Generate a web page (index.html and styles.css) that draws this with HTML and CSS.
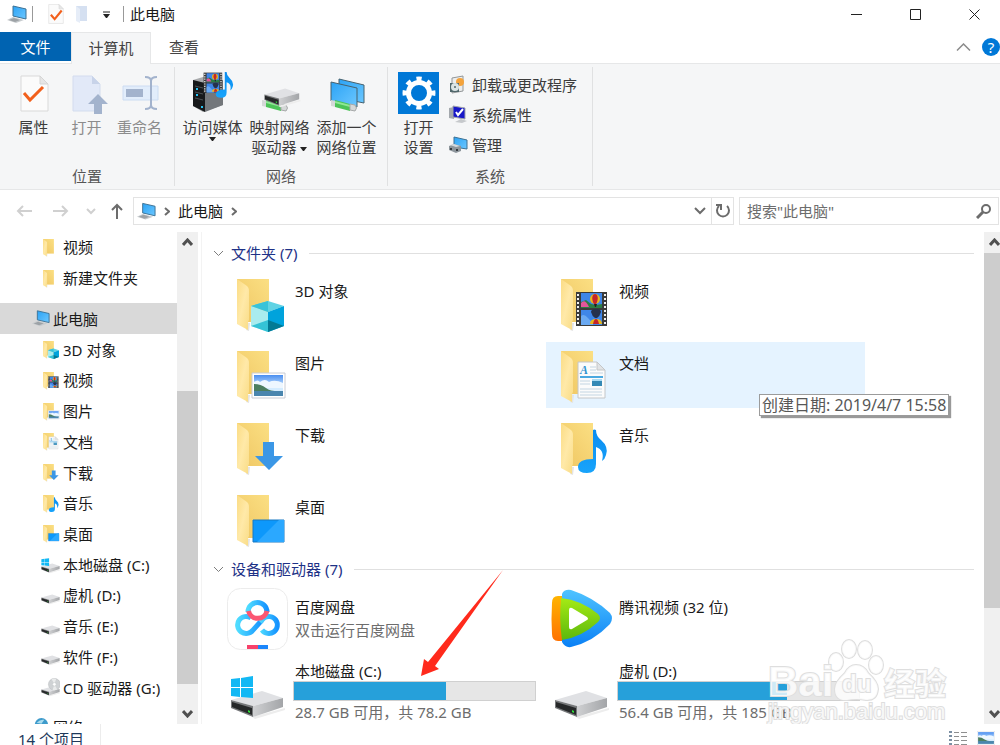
FILE: index.html
```html
<!DOCTYPE html>
<html lang="zh-CN">
<head>
    <meta charset="UTF-8">
    <meta name="viewport" content="width=device-width, initial-scale=1.0">
    <title>此电脑</title>
    <link rel="stylesheet" href="styles.css">
</head>
<body>
    <!-- Shared icon shapes -->
    <svg class="defs" width="0" height="0" aria-hidden="true">
        <defs>
            <linearGradient id="gold" x1="0" y1="1" x2="1" y2="0"><stop offset="0" stop-color="#efc662"/><stop offset="1" stop-color="#fbdf83"/></linearGradient>
            <linearGradient id="flap" x1="0" y1="0" x2="1" y2="1"><stop offset="0" stop-color="#fbdc84"/><stop offset="0.5" stop-color="#ffe9a8"/><stop offset="1" stop-color="#f9dc86"/></linearGradient>
            <linearGradient id="screen" x1="0" y1="0" x2="1" y2="1"><stop offset="0" stop-color="#2ba3f5"/><stop offset="1" stop-color="#6cc7ff"/></linearGradient>
            <linearGradient id="metal" x1="0" y1="0" x2="1" y2="0"><stop offset="0" stop-color="#cfd0d2"/><stop offset="1" stop-color="#a3a5a8"/></linearGradient>
            <linearGradient id="sky" x1="0" y1="0" x2="0" y2="1"><stop offset="0" stop-color="#4a8ef0"/><stop offset="0.6" stop-color="#d4ecff"/></linearGradient>
            <linearGradient id="note" x1="0" y1="0" x2="0" y2="1"><stop offset="0" stop-color="#0a8cf0"/><stop offset="1" stop-color="#18a4fb"/></linearGradient>
            <linearGradient id="cyan" x1="0" y1="0" x2="1" y2="0"><stop offset="0" stop-color="#4fdcff"/><stop offset="1" stop-color="#1593ff"/></linearGradient>
            <linearGradient id="orange" x1="0" y1="0" x2="0" y2="1"><stop offset="0" stop-color="#ffb400"/><stop offset="1" stop-color="#ff7200"/></linearGradient>
            <linearGradient id="blue" x1="0" y1="0" x2="0" y2="1"><stop offset="0" stop-color="#4fc3ff"/><stop offset="1" stop-color="#0a80f5"/></linearGradient>
            <linearGradient id="green" x1="0" y1="0" x2="0" y2="1"><stop offset="0" stop-color="#a5ea15"/><stop offset="1" stop-color="#5cb80c"/></linearGradient>

            <g id="folder">
                <path d="M11 8h32v43H11z" fill="url(#gold)"/>
                <path d="M22 52h2l-1 8-3-1z" fill="#e4e4e4"/>
                <path d="M11 8l10 7q2 2 2 4v30q-1 1-1 4v6l-11-6z" fill="url(#flap)"/>
            </g>
            <g id="film">
                <path d="M26 21h31v34H26z" fill="#3b3b3b"/>
                <path d="M28 23v31M55 23v31" stroke="#f2f2f2" stroke-width="2" stroke-dasharray="2 2"/>
                <path d="M31 22h21v15H31zM31 39h21v15H31z" fill="#3f86e8"/>
                <path d="M31 31l5-2 5 4 5 1 6-1v4H31z" fill="#2b7d43"/>
                <path d="M31 32q4-5 8 4h-8z" fill="#e3559b"/>
                <circle cx="45" cy="28" r="5" fill="#e8b71b"/>
                <path d="M43 24q-2 4 1 9h2q3-5 1-9-2-2-4 0z" fill="#c4252b"/>
                <path d="M44 33h3l-1 3h-1z" fill="#221f1f"/>
                <path d="M41 41q0-3 5-3t5 3q-1 4-4 6h-2q-3-2-4-6z" fill="#26314c"/>
                <path d="M31 45q3-3 7 2t5 3v4H31z" fill="#6aa9f2"/>
                <path d="M40 53q0-5 6-5t6 5z" fill="#e8b71b"/>
                <path d="M43 53q1-5 3-5t3 5z" fill="#c4252b"/>
            </g>
            <g id="note-shape">
                <path d="M43 15q1-1 3 0 0 6 5 10 8 7 5 15-1 4-4 6 3-11-6-14v17q0 9-9 9-9 0-9-6 0-8 15-8z" fill="url(#note)"/>
            </g>
            <g id="f-3d">
                <use href="#folder"/>
                <path d="M25 35l17-5 16 5-16 6z" fill="#5fd3e4"/>
                <path d="M25 35l17 6v20l-17-6z" fill="#a9ecee"/>
                <path d="M42 41l16-6v20l-16 6z" fill="#00a3dc"/>
                <path d="M25 55l17-6v12z" fill="#35c3d6"/>
                <path d="M42 49l16 6-16 6z" fill="#037a94"/>
                <path d="M25 35l17-5v11z" fill="#39c3d9"/>
            </g>
            <g id="picture">
                <path d="M26 30h33v25H26z" fill="#fff" stroke="#c9ccd4"/>
                <path d="M28 32h29v21H28z" fill="url(#sky)"/>
                <path d="M28 39q4-3 6 0 5-4 9 0 6-3 14 1v5H28z" fill="#eef7ff"/>
                <path d="M28 41q7 0 12 4t17 3v1H28z" fill="#4c7e60"/>
                <path d="M28 48h29v5H28z" fill="#4a86ae"/>
            </g>
            <g id="f-picture"><use href="#folder"/><use href="#picture"/></g>
            <g id="f-download"><use href="#folder"/><path d="M37 27h11v14h9L43 55 29 41h8z" fill="#3b97e6"/></g>
            <g id="f-desktop"><use href="#folder"/><path d="M27 33h31v22H27z" fill="#0d98fb" stroke="#1879c2"/><path d="M31 55l22-22h5v22z" fill="#2ba8ff"/></g>
            <g id="f-video"><use href="#folder"/><use href="#film"/></g>
            <g id="f-music"><use href="#folder"/><use href="#note-shape"/></g>
            <g id="f-document">
                <use href="#folder"/>
                <path d="M28 19h19l8 8v28H28z" fill="#fbfbfb" stroke="#c4c6c8"/>
                <path d="M47 19v8h8z" fill="#e1e3e5" stroke="#c4c6c8"/>
                <path d="M40 24h6M40 27h6M40 30h13M30 46h22M30 49h22M30 52h22M30 38h10M30 41h10" stroke="#c3d5e2"/>
                <path d="M30 34h23" stroke="#4aa9e0" stroke-width="2"/>
                <path d="M42 36h10v7H42z" fill="#3489b5"/>
                <path d="M42 36h10v2H42z" fill="#a9dcf5"/>
                <text x="30" y="31" class="doc-letter">A</text>
            </g>
            <g id="drive">
                <path d="M26 58l33-9v2l-30 9z" fill="#ededed"/>
                <path d="M5 41l31-9 21 7-30 8z" fill="#e0e1e4"/>
                <path d="M27 47l30-8v9l-30 10z" fill="url(#metal)"/>
                <path d="M5 41l22 6v11L5 49z" fill="#77797b"/>
                <path d="M6 43l20 6v7L6 48z" fill="#262829"/>
                <path d="M22 51l2 1v2l-2-1z" fill="#2fe03a"/>
            </g>
            <g id="drive-c">
                <use href="#drive"/>
                <path d="M5 20l9-1v9H5zM15 19l12-2v11H15zM5 29h9v9l-9-1zM15 29h12v10l-12-1z" fill="#12b8f4"/>
            </g>
            <g id="drive-cd">
                <use href="#drive"/>
                <circle cx="42" cy="26" r="17" fill="#cfd2d4" stroke="#aeb2b5"/>
                <path d="M42 26l-8-15a17 17 0 0 1 13 0zM42 26l8 15a17 17 0 0 1-13 1z" fill="#e9ebeb"/>
                <circle cx="42" cy="26" r="5" fill="#fff" stroke="#b3b6b8"/>
            </g>
            <g id="pc">
                <path d="M7 1l13 3v10L7 11z" fill="url(#screen)" stroke="#3c7194"/>
                <path d="M1 15l6-3 11 3-8 3z" fill="#c7cbce"/>
                <path d="M3 15l5-2 6 2-5 2z" fill="#9da2a6"/>
            </g>
            <g id="page">
                <path d="M1 1h19l8 8v27H1z" fill="#fbfbfb" stroke="#d9d9d9"/>
                <path d="M20 1v8h8z" fill="#e6e6e6" stroke="#d5d5d5"/>
            </g>
            <g id="pipe">
                <path d="M2 1l5 1v6L2 7z" fill="#d5d8d8"/>
                <path d="M6 1l15 4v7L6 8z" fill="#4cc458"/>
                <path d="M6 2l15 4v2L6 4z" fill="#8fe894"/>
                <path d="M21 5l5 1q3 3 0 6l-5-1z" fill="#d5d8d8" stroke="#a6a9a9"/>
            </g>
        </defs>
    </svg>

    <header class="titlebar">
        <svg class="title-pc" width="21" height="19" viewBox="0 0 21 19"><use href="#pc"/></svg>
        <span class="bar"></span>
        <button class="quick" aria-label="属性"><svg width="16" height="20" viewBox="0 0 29 37"><use href="#page"/><path d="M5 20l7 8 13-16" fill="none" stroke="#f2601c" stroke-width="4"/></svg></button>
        <button class="quick" aria-label="新建文件夹"><svg width="14" height="20" viewBox="0 0 14 20"><path d="M1 2h11v15H1z" fill="#d5e0f1"/><path d="M1 2l4 3v14l-4-2z" fill="#e6edf8"/></svg></button>
        <button class="quick" aria-label="自定义快速访问工具栏"><svg width="7" height="7" viewBox="0 0 7 7"><path d="M0 1h7" stroke="#222"/><path d="M0 3h7L4 7H3z" fill="#222"/></svg></button>
        <span class="bar"></span>
        <h1>此电脑</h1>
        <div class="window-buttons">
            <button aria-label="最小化"><svg width="11" height="11"><path d="M0 5.500h11" stroke="#222"/></svg></button>
            <button aria-label="最大化"><svg width="11" height="11"><path d="M.5.500h10v10H.5z" fill="none" stroke="#222"/></svg></button>
            <button aria-label="关闭"><svg width="11" height="11"><path d="M.5.500l10 10M10.500.500l-10 10" stroke="#222"/></svg></button>
        </div>
    </header>

    <nav class="tabs">
        <button class="tab file">文件</button>
        <button class="tab active">计算机</button>
        <button class="tab">查看</button>
        <div class="tab-tools">
            <button aria-label="折叠功能区"><svg width="15" height="8"><path d="M1 7.500l6.500-6.500L14 7.500" fill="none" stroke="#8c8c8c" stroke-width="1.500"/></svg></button>
            <button class="help" aria-label="帮助">?</button>
        </div>
    </nav>

    <section class="ribbon">
        <div class="group">
            <div class="commands location">
                <button class="command"><svg width="48" height="42"><g transform="translate(10 3)"><use href="#page"/><path d="M4 18l6 7 13-13" fill="none" stroke="#f2601c" stroke-width="3"/></g></svg>属性</button>
                <button class="command disabled" disabled><svg width="48" height="42"><path d="M10 4h19l8 8v27H10z" fill="#e2e9f8" stroke="#d3dcee"/><path d="M29 4v8h8z" fill="#c8d3e9"/><path d="M35 22l10 10h-6v10h-8V32h-6z" fill="#a3b3cd"/></svg>打开</button>
                <button class="command disabled" disabled><svg width="48" height="42"><path d="M7 14h35v14H7z" fill="#e2edfb" stroke="#ccdcf2"/><path d="M10 17h17v8H10z" fill="#a3b3cd"/><path d="M29 5q6 0 6 4v24q0 4 6 4M41 5q-6 0-6 4M35 33q0 4-6 4" fill="none" stroke="#a3b3cd" stroke-width="2"/></svg>重命名</button>
            </div>
            <div class="group-name">位置</div>
        </div>
        <div class="group">
            <div class="commands network">
                <button class="command">
                    <svg width="48" height="42"><path d="M4 8l10-3 20 5v23l-20 7L4 34z" fill="#a9abad"/><path d="M4 8l12 3v29L4 34z" fill="#17191b"/><path d="M16 11l18-3v25l-18 7z" fill="#73777b"/><path d="M6 14l8 2M6 20l8 2M6 26l8 2" stroke="#4d5357"/><path d="M7 17h2M7 23h2M12 35h2" stroke="#27c3f3" stroke-width="2"/><use href="#film" transform="translate(-1 -12) scale(.6)"/><use href="#note-shape" transform="translate(10 -9) scale(.6)"/></svg>
                    访问媒体
                    <svg class="drop below" width="7" height="4"><path d="M0 0h7L4 4H3z"/></svg>
                </button>
                <button class="command">
                    <svg width="48" height="42"><use href="#pipe" transform="translate(4 27)"/><use href="#drive" transform="translate(5 -5) scale(.67)"/></svg>
                    映射网络<br>驱动器 <svg class="drop" width="7" height="4"><path d="M0 0h7L4 4H3z"/></svg>
                </button>
                <button class="command">
                    <svg width="48" height="42"><path d="M16 7l25 6v18l-25-5z" fill="url(#screen)" stroke="#47626f"/><path d="M8 10l26 6v19L8 29z" fill="url(#screen)" stroke="#47626f"/><use href="#pipe" transform="translate(6 27)"/></svg>
                    添加一个<br>网络位置
                </button>
            </div>
            <div class="group-name">网络</div>
        </div>
        <div class="group">
            <div class="commands system">
                <button class="command settings">
                    <svg width="42" height="42"><path d="M0 0h41v42H0z" fill="#0078d7"/><circle cx="21" cy="21" r="10.500" fill="none" stroke="#fff" stroke-width="5"/><circle cx="21" cy="21" r="14" fill="none" stroke="#fff" stroke-width="5" stroke-dasharray="5 6" pathLength="88" transform="rotate(-10 21 21)"/></svg>
                    打开<br>设置
                </button>
                <div class="links">
                    <button><svg width="20" height="20"><path d="M4 3l11-2v15L4 18z" fill="#eceded" stroke="#929698"/><circle cx="12" cy="7" r="4" fill="#f4a33b"/><path d="M2 8h9v9H2z" fill="#50676b"/><circle cx="7" cy="12" r="4" fill="#dbe4e5"/><circle cx="7" cy="12" r="1" fill="#50676b"/></svg>卸载或更改程序</button>
                    <button><svg width="20" height="20"><path d="M1 3l5-1v12l-5-1z" fill="#a3a8ad"/><path d="M5 1l12 2v11L5 12z" fill="#1717c8" stroke="#a1a5aa"/><path d="M8 7l2 3 5-6" fill="none" stroke="#fff" stroke-width="2"/><path d="M7 17l6-3 6 2-5 2z" fill="#c6c9cc"/></svg>系统属性</button>
                    <button><svg width="20" height="20"><path d="M6 2l13 3v9L6 12z" fill="url(#screen)" stroke="#3c7194"/><path d="M1 11l5-2 7 2v5l-5 2-7-3z" fill="#8d959b"/><path d="M2 10l4-1 6 2-4 1z" fill="#d5dade"/><path d="M3 13v2M9 14v2" stroke="#363b40" stroke-width="2"/></svg>管理</button>
                </div>
            </div>
            <div class="group-name">系统</div>
        </div>
    </section>

    <div class="address-row">
        <button class="arrow" aria-label="后退"><svg width="16" height="12"><path d="M7 1L2 6l5 5M2 6h14" fill="none" stroke="#d0d0d0" stroke-width="2"/></svg></button>
        <button class="arrow" aria-label="前进"><svg width="16" height="12"><path d="M9 1l5 5-5 5M14 6H0" fill="none" stroke="#d0d0d0" stroke-width="2"/></svg></button>
        <button class="arrow recent" aria-label="最近浏览的位置"><svg width="10" height="7"><path d="M1 1l4 4 4-4" fill="none" stroke="#d0d0d0" stroke-width="2"/></svg></button>
        <button class="arrow up" aria-label="上移"><svg width="12" height="16"><path d="M1 7l5-5 5 5M6 2v14" fill="none" stroke="#6c6c6c" stroke-width="2"/></svg></button>
        <div class="address">
            <svg width="20" height="19" viewBox="0 0 21 19"><use href="#pc"/></svg>
            <svg width="6" height="9"><path d="M1 1l4 3.500L1 8" fill="none" stroke="#6c6c6c" stroke-width="2"/></svg>
            <a href="#">此电脑</a>
            <svg width="6" height="9"><path d="M1 1l4 3.500L1 8" fill="none" stroke="#6c6c6c" stroke-width="2"/></svg>
            <button class="history" aria-label="以前的位置"><svg width="12" height="8"><path d="M1 1l5 5 5-5" fill="none" stroke="#6c6c6c" stroke-width="2"/></svg></button>
            <button class="refresh" aria-label="刷新"><svg width="16" height="16"><path d="M12 3a6 6 0 1 1-8 0" fill="none" stroke="#6c6c6c" stroke-width="2"/><path d="M1 2h5v5" fill="none" stroke="#6c6c6c" stroke-width="2"/></svg></button>
        </div>
        <form class="search">
            <input type="text" placeholder="搜索&quot;此电脑&quot;" aria-label="搜索">
            <button aria-label="开始搜索"><svg width="16" height="16"><circle cx="10" cy="6" r="4" fill="none" stroke="#6c6c6c" stroke-width="2"/><path d="M7 9l-6 6" stroke="#6c6c6c" stroke-width="3"/></svg></button>
        </form>
    </div>

    <main>
        <aside>
            <div class="tree">
                <a href="#"><svg viewBox="6 5 54 56"><use href="#folder"/></svg>视频</a>
                <a href="#"><svg viewBox="6 5 54 56"><use href="#folder"/></svg>新建文件夹</a>
                <a href="#" class="root selected"><svg viewBox="0 0 21 19"><use href="#pc"/></svg>此电脑</a>
                <a href="#"><svg viewBox="6 5 54 56"><use href="#f-3d"/></svg>3D 对象</a>
                <a href="#"><svg viewBox="6 5 54 56"><use href="#f-video"/></svg>视频</a>
                <a href="#"><svg viewBox="6 5 54 56"><use href="#f-picture"/></svg>图片</a>
                <a href="#"><svg viewBox="6 5 54 56"><use href="#f-document"/></svg>文档</a>
                <a href="#"><svg viewBox="6 5 54 56"><use href="#f-download"/></svg>下载</a>
                <a href="#"><svg viewBox="6 5 54 56"><use href="#f-music"/></svg>音乐</a>
                <a href="#"><svg viewBox="6 5 54 56"><use href="#f-desktop"/></svg>桌面</a>
                <a href="#"><svg viewBox="4 8 54 54"><use href="#drive-c"/></svg>本地磁盘 (C:)</a>
                <a href="#"><svg viewBox="4 8 54 54"><use href="#drive"/></svg>虚机 (D:)</a>
                <a href="#"><svg viewBox="4 8 54 54"><use href="#drive"/></svg>音乐 (E:)</a>
                <a href="#"><svg viewBox="4 8 54 54"><use href="#drive"/></svg>软件 (F:)</a>
                <a href="#"><svg viewBox="4 8 54 54"><use href="#drive-cd"/></svg>CD 驱动器 (G:)</a>
                <a href="#" class="root last"><svg viewBox="0 0 20 20"><circle cx="11" cy="8" r="7" fill="#3e9bcb"/><path d="M6 6q4-4 8-3l-3 4z" fill="#a9dcef"/><path d="M1 12h9v7H1z" fill="#7ebfe0"/></svg>网络</a>
            </div>
            <div class="scrollbar">
                <button aria-label="向上滚动"><svg width="11" height="9"><path d="M1 7l4.500-5L10 7" fill="none" stroke="#505050" stroke-width="3"/></svg></button>
                <div class="track"><div class="thumb"></div></div>
                <button aria-label="向下滚动"><svg width="11" height="9"><path d="M1 2l4.500 5L10 2" fill="none" stroke="#505050" stroke-width="3"/></svg></button>
            </div>
        </aside>

        <div class="content">
            <h2><svg width="11" height="7"><path d="M1 1l4.500 4.500L10 1" fill="none" stroke="#7d7d7d"/></svg>文件夹 (7)</h2>
            <div class="tiles">
                <a href="#" class="tile"><svg width="64" height="64"><use href="#f-3d"/></svg><div class="info"><p>3D 对象</p></div></a>
                <a href="#" class="tile"><svg width="64" height="64"><use href="#f-video"/></svg><div class="info"><p>视频</p></div></a>
                <a href="#" class="tile"><svg width="64" height="64"><use href="#f-picture"/></svg><div class="info"><p>图片</p></div></a>
                <a href="#" class="tile hovered"><svg width="64" height="64"><use href="#f-document"/></svg><div class="info"><p>文档</p></div><span class="tooltip" role="tooltip">创建日期: 2019/4/7 15:58</span></a>
                <a href="#" class="tile"><svg width="64" height="64"><use href="#f-download"/></svg><div class="info"><p>下载</p></div></a>
                <a href="#" class="tile"><svg width="64" height="64"><use href="#f-music"/></svg><div class="info"><p>音乐</p></div></a>
                <a href="#" class="tile"><svg width="64" height="64"><use href="#f-desktop"/></svg><div class="info"><p>桌面</p></div></a>
            </div>

            <h2><svg width="11" height="7"><path d="M1 1l4.500 4.500L10 1" fill="none" stroke="#7d7d7d"/></svg>设备和驱动器 (7)</h2>
            <div class="tiles">
                <a href="#" class="tile">
                    <svg width="64" height="64">
                        <rect x="1.500" y="1.500" width="60" height="61" rx="13" fill="#fff" stroke="#ececec"/>
                        <g fill="none" stroke-width="5">
                            <path d="M36 33l-9 10a8.500 8.500 0 1 1-2-12" stroke="url(#cyan)"/>
                            <path d="M36 43a8.500 8.500 0 1 0 2-12l-4 4" stroke="url(#cyan)"/>
                            <path d="M22 25a9.500 9.500 0 0 1 19 0" stroke="url(#cyan)"/>
                            <path d="M22.500 24a9.500 9.500 0 0 0 18.500 0" stroke="#fb5672"/>
                        </g>
                        <path d="M21 58h11v4H21z" fill="#f8416a"/><path d="M32 58h10v4H32z" fill="#1b86fb"/>
                    </svg>
                    <div class="info"><p>百度网盘</p><p class="detail">双击运行百度网盘</p></div>
                </a>
                <a href="#" class="tile">
                    <svg width="64" height="64">
                        <path d="M13 9H8q-6 0-6 7-1 16 0 31 0 7 6 7h5z" fill="url(#orange)"/>
                        <path d="M12 7q2-5 9-4 22 7 39 23 4 5 0 11-17 18-39 23-6 1-9-5z" fill="url(#blue)"/>
                        <path d="M11 11q20 2 37 16 4 4 0 8-16 15-36 18-3-20-1-42z" fill="url(#green)"/>
                        <path d="M19 23q0-3 3-2l15 9q2 2 0 3l-15 9q-3 1-3-2z" fill="#fff"/>
                    </svg>
                    <div class="info"><p>腾讯视频 (32 位)</p></div>
                </a>
                <a href="#" class="tile">
                    <svg width="64" height="64"><use href="#drive-c"/></svg>
                    <div class="info disk"><p>本地磁盘 (C:)</p><div class="usage"><div class="used" style="width: 63%"></div></div><p class="detail">28.7 GB 可用，共 78.2 GB</p></div>
                </a>
                <a href="#" class="tile">
                    <svg width="64" height="64"><use href="#drive"/></svg>
                    <div class="info disk"><p>虚机 (D:)</p><div class="usage"><div class="used" style="width: 70%"></div></div><p class="detail">56.4 GB 可用，共 185 GB</p></div>
                </a>
            </div>

            <svg class="pointer" width="84" height="108"><path d="M83 0L15 96l4 3L1 106 4 89l4 3z" fill="#ff2a1c"/></svg>
        </div>

        <div class="scrollbar main-scroll">
            <button aria-label="向上滚动"><svg width="11" height="9"><path d="M1 7l4.500-5L10 7" fill="none" stroke="#505050" stroke-width="3"/></svg></button>
            <div class="track"><div class="thumb"></div></div>
            <button aria-label="向下滚动"><svg width="11" height="9"><path d="M1 2l4.500 5L10 2" fill="none" stroke="#505050" stroke-width="3"/></svg></button>
        </div>
    </main>

    <footer>
        <span class="count">14 个项目</span>
        <div class="views">
            <button aria-label="详细信息"><svg width="18" height="16"><path d="M0 1h3M0 5h3M0 9h3M0 13h3" stroke="#7b8fa3" stroke-width="2"/><path d="M5 1.500h5M12 1.500h6M5 5.500h5M12 5.500h6M5 9.500h5M12 9.500h6M5 13.500h5M12 13.500h6" stroke="#8f8f8f"/></svg></button>
            <button aria-label="大图标"><svg width="18" height="14" viewBox="26 30 33 25" preserveAspectRatio="none"><use href="#picture"/></svg></button>
        </div>
    </footer>

    <svg class="watermark" width="190" height="92" viewBox="0 0 190 92" aria-hidden="true">
        <g class="outline">
            <ellipse cx="71" cy="30" rx="7" ry="9"/>
            <ellipse cx="84" cy="17" rx="7" ry="9"/>
            <ellipse cx="100" cy="18" rx="7" ry="9"/>
            <ellipse cx="111" cy="33" rx="7" ry="9"/>
            <path d="M91 33q8 0 12 8 10 9 10 16-1 12-12 11-10-2-19 0-12 1-12-11 0-7 10-16 4-8 11-8z"/>
            <text x="3" y="64" class="wm-bai">Bai</text>
            <text x="77" y="60" class="wm-du">du</text>
            <text x="119" y="63" class="wm-cjk">经验</text>
            <text x="3" y="87" class="wm-url">jingyan.baidu.com</text>
        </g>
    </svg>
</body>
</html>
```
FILE: styles.css
```css
* {
    box-sizing: border-box;
}

body {
    margin: 0;
    height: 100vh;
    display: flex;
    flex-direction: column;
    overflow: hidden;
    position: relative;
    background: #fff;
    color: #1a1a1a;
    font-family: "Noto Sans", "Noto Sans CJK SC", sans-serif;
    font-size: 15px;
    line-height: 20px;
}

button,
input {
    font: inherit;
    color: inherit;
    border: 0;
    background: none;
    padding: 0;
}

a {
    color: inherit;
    text-decoration: none;
}

svg {
    flex: none;
}

h1,
h2,
p {
    margin: 0;
    font-size: 15px;
    font-weight: normal;
}

.defs {
    position: absolute;
}

.doc-letter {
    font: italic bold 12px "Liberation Serif", serif;
    fill: #2f93cf;
}

/* Title bar */
.titlebar {
    height: 32px;
    display: flex;
    align-items: center;
    padding: 0 0 4px 6px;
}

.bar {
    width: 1px;
    height: 16px;
    margin: 0 6px 0 5px;
    background: #999;
}

.quick {
    display: flex;
    justify-content: center;
    width: 26px;
}

.titlebar .quick:first-of-type {
    margin-left: 4px;
}

.titlebar .quick:nth-of-type(3) {
    width: 22px;
    margin-right: 1px;
}

.window-buttons {
    display: flex;
    margin-left: auto;
    margin-right: -4px;
}

.window-buttons button {
    width: 59px;
    height: 28px;
    display: flex;
    align-items: center;
    justify-content: center;
}

/* Ribbon tabs */
.tabs {
    height: 31px;
    display: flex;
    align-items: flex-start;
}

.tab {
    height: 29px;
    width: 66px;
    color: #444;
}

.tab.file {
    width: 71px;
    background: #0063b1;
    color: #fff;
}

.tab.active {
    width: 80px;
    height: 32px;
    padding-bottom: 2px;
    border: 1px solid #e6e7e8;
    border-bottom: 0;
    background: #f5f6f7;
    z-index: 1;
}

.tab-tools {
    margin-left: auto;
    height: 30px;
    display: flex;
    align-items: center;
    gap: 11px;
}

.tab-tools button {
    display: flex;
    justify-content: center;
}

.help {
    width: 18px;
    height: 18px;
    border-radius: 50%;
    background: #0078d7;
    color: #fff;
    line-height: 18px;
}

/* Ribbon */
.ribbon {
    height: 127px;
    flex: none;
    display: flex;
    padding: 3px 0;
    background: #f5f6f7;
    border-top: 1px solid #e6e7e8;
    border-bottom: 1px solid #e6e7e8;
    color: #3c3c3c;
}

.group {
    display: flex;
    flex-direction: column;
    justify-content: space-between;
    padding-top: 5px;
    border-right: 1px solid #e0e1e2;
}

.commands {
    display: flex;
    align-items: flex-start;
}

.location {
    padding: 0 8px 0 7px;
}

.network {
    padding: 0 7px 0 4px;
}

.system {
    padding: 0 15px 0 4px;
}

.command {
    width: 53px;
    white-space: nowrap;
}

.command > svg:first-child {
    display: block;
    margin: 0 auto 3px;
}

.network .command {
    width: 67px;
}

.command.disabled {
    color: #8c8c8c;
}

.drop {
    fill: #222;
    vertical-align: middle;
}

.drop.below {
    display: block;
    margin: 0 auto;
}

.links {
    display: flex;
    flex-direction: column;
    gap: 10px;
    padding-top: 3px;
    margin-left: 3px;
}

.links button {
    display: flex;
    align-items: center;
    gap: 4px;
}

.group-name {
    text-align: center;
    color: #555;
}

/* Address row */
.address-row {
    height: 42px;
    flex: none;
    display: flex;
    align-items: center;
    padding: 0 1px 0 12px;
}

.arrow {
    width: 37px;
    display: flex;
    padding-left: 4px;
}

.arrow.recent {
    width: 23px;
    padding-left: 0;
}

.arrow.up {
    width: 24px;
    padding-left: 2px;
}

.address {
    flex: 1;
    height: 28px;
    display: flex;
    align-items: center;
    gap: 8px;
    padding-left: 2px;
    border: 1px solid #e3e3e3;
}

.history {
    margin-left: auto;
    margin-right: -3px;
}

.refresh {
    align-self: stretch;
    width: 22px;
    display: flex;
    align-items: center;
    justify-content: center;
    border-left: 1px solid #e3e3e3;
}

.search {
    flex: 0 1 260px;
    height: 28px;
    display: flex;
    align-items: center;
    margin-left: 5px;
    padding: 0 6px 0 7px;
    border: 1px solid #e3e3e3;
}

.search input {
    flex: 1;
    min-width: 0;
    outline: none;
}

.search input::placeholder {
    color: #6d6d6d;
}

.search button,
.history {
    display: flex;
}

/* Main area */
main {
    flex: 1;
    min-height: 0;
    display: flex;
}

aside {
    flex: none;
    width: 202px;
    display: flex;
    padding-right: 3px;
    border-right: 1px solid #f3f3f3;
}

.tree {
    flex: 1;
    display: flex;
    flex-direction: column;
    overflow: hidden;
}

.tree a {
    flex: 1;
    display: flex;
    align-items: center;
    gap: 3px;
    padding-left: 41px;
    white-space: nowrap;
}

.tree svg {
    width: 19px;
    height: 19px;
}

.tree .root {
    margin-top: 10px;
    padding-left: 31px;
}

.tree .last {
    flex: 0 0 11px;
    min-height: 0;
    align-items: flex-start;
    padding-top: 4px;
}

.tree .selected {
    background: #d9d9d9;
}

.scrollbar {
    flex: none;
    width: 21px;
    display: flex;
    flex-direction: column;
    background: #f0f0f0;
}

.scrollbar button {
    height: 21px;
    display: flex;
    align-items: center;
    justify-content: center;
}

.track {
    flex: 1;
    padding: 138px 0 19px;
}

.thumb {
    height: 100%;
    background: #cdcdcd;
}

.main-scroll {
    margin-right: -5px;
}

.main-scroll .track {
    padding: 0 0 95px;
}

.content {
    flex: 1;
    min-width: 0;
    position: relative;
    padding: 4px 10px 0 11px;
    overflow: hidden;
}

h2 {
    display: flex;
    align-items: center;
    height: 34px;
    color: #1e3287;
    white-space: nowrap;
}

h2 svg {
    margin-right: 7px;
}

h2::after {
    content: "";
    flex: 1;
    height: 1px;
    margin-left: 12px;
    background: #e0e0e0;
}

.tiles {
    display: grid;
    grid-template-columns: repeat(auto-fill, 319px);
    gap: 6px 5px;
    padding-left: 9px;
}

.tile {
    position: relative;
    height: 66px;
    display: flex;
    align-items: center;
    gap: 5px;
    padding-left: 4px;
}

.tile.hovered {
    background: #e5f3ff;
}

.info {
    align-self: stretch;
    padding-top: 11px;
    white-space: nowrap;
}

.detail {
    margin-top: 3px;
    color: #6d6d6d;
}

.disk {
    flex: 1;
    padding-top: 3px;
}

.disk .detail {
    margin-top: 1px;
}

.usage {
    width: 243px;
    height: 20px;
    margin-left: -2px;
    border: 1px solid #d0d0d0;
    background: #e6e6e6;
}

.used {
    height: 100%;
    background: #26a0da;
}

.tooltip {
    position: absolute;
    left: 213px;
    top: 52px;
    z-index: 1;
    padding: 0 2px;
    border: 1px solid #9b9b9b;
    background: #fff;
    box-shadow: 2px 2px 1px rgba(0, 0, 0, 0.4);
    color: #575757;
    font-size: 16px;
    white-space: nowrap;
}

.pointer {
    position: absolute;
    left: 218px;
    top: 338px;
}

/* Status bar */
footer {
    flex: none;
    height: 21px;
    display: flex;
    justify-content: space-between;
    overflow: hidden;
    line-height: 30px;
    color: #1e395b;
}

.count {
    height: 30px;
    padding: 0 16px 0 18px;
    border-right: 1px solid #ececec;
}

.views {
    display: flex;
    gap: 10px;
    padding: 7px 5px 0 0;
}

.views button {
    height: 16px;
    display: flex;
}

/* Watermark */
.watermark {
    position: absolute;
    right: 45px;
    bottom: 21px;
    z-index: 2;
}

.outline {
    fill: rgba(255, 255, 255, 0.8);
    stroke: #dedede;
    stroke-width: 2px;
    paint-order: stroke;
}

.wm-bai {
    font: bold 42px "Liberation Sans", sans-serif;
}

.wm-du {
    font: bold 24px "Liberation Sans", sans-serif;
}

.wm-cjk {
    font: bold 31px "Noto Sans CJK SC", sans-serif;
}

.wm-url {
    font: 22px "Liberation Sans", sans-serif;
}
```
